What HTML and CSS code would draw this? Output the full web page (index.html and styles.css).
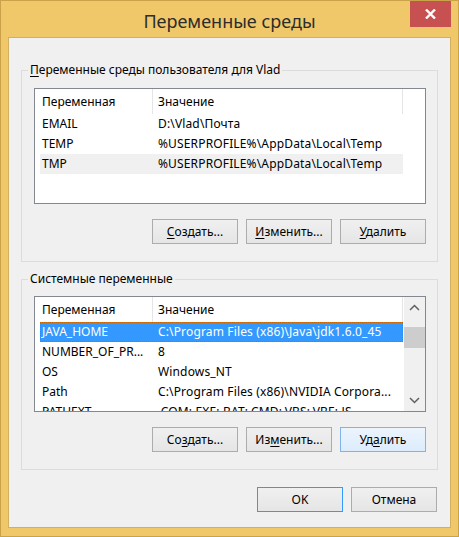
FILE: index.html
```html
<!DOCTYPE html>
<html lang="ru">
<head>
<meta charset="utf-8">
<title>Переменные среды</title>
<link rel="stylesheet" href="styles.css">
</head>
<body>
<div class="window">
  <div class="titlebar">
    <span></span>
    <div class="title">Переменные среды</div>
    <div class="close">
      <svg width="11" height="10" viewBox="0 0 11 10"><path d="M1 0.5 L10 9.5 M10 0.5 L1 9.5" stroke="#fff" stroke-width="2.4" fill="none"/></svg>
    </div>
  </div>
  <div class="client">
    <fieldset class="group g1">
      <legend><u>П</u>еременные среды пользователя для Vlad</legend>
      <div class="list">
        <div class="lmain">
          <div class="lhead"><div class="h1">Переменная</div><div class="h2">Значение</div></div>
          <div class="row"><span class="c1">EMAIL</span><span class="c2">D:\Vlad\Почта</span></div>
          <div class="row"><span class="c1">TEMP</span><span class="c2">%USERPROFILE%\AppData\Local\Temp</span></div>
          <div class="row inactive"><span class="c1">TMP</span><span class="c2">%USERPROFILE%\AppData\Local\Temp</span></div>
        </div>
      </div>
      <div class="btns">
        <div class="btn"><u>С</u>оздать...</div>
        <div class="btn"><u>И</u>зменить...</div>
        <div class="btn"><u>У</u>далить</div>
      </div>
    </fieldset>
    <fieldset class="group g2">
      <legend>Системные переменные</legend>
      <div class="list">
        <div class="lmain">
          <div class="lhead"><div class="h1">Переменная</div><div class="h2">Значение</div></div>
          <div class="row selected"><span class="c1">JAVA_HOME</span><span class="c2">C:\Program Files (x86)\Java\jdk1.6.0_45</span></div>
          <div class="row"><span class="c1">NUMBER_OF_PR...</span><span class="c2">8</span></div>
          <div class="row"><span class="c1">OS</span><span class="c2">Windows_NT</span></div>
          <div class="row"><span class="c1">Path</span><span class="c2">C:\Program Files (x86)\NVIDIA Corpora...</span></div>
          <div class="row"><span class="c1">PATHEXT</span><span class="c2">.COM;.EXE;.BAT;.CMD;.VBS;.VBE;.JS...</span></div>
        </div>
        <div class="sbar">
          <div class="sarrow"><svg width="11" height="7" viewBox="0 0 11 7"><path d="M1 6 L5.5 1.5 L10 6" stroke="#606060" stroke-width="1.5" fill="none"/></svg></div>
          <div class="strack"><div class="thumb"></div></div>
          <div class="sarrow"><svg width="11" height="7" viewBox="0 0 11 7"><path d="M1 1 L5.5 5.5 L10 1" stroke="#606060" stroke-width="1.5" fill="none"/></svg></div>
        </div>
      </div>
      <div class="btns">
        <div class="btn">Со<u>з</u>дать...</div>
        <div class="btn">Из<u>м</u>енить...</div>
        <div class="btn hover">Уд<u>а</u>лить</div>
      </div>
    </fieldset>
    <div class="dlgbtns">
      <div class="btn default">OK</div>
      <div class="btn">Отмена</div>
    </div>
  </div>
</div>
</body>
</html>
```
FILE: styles.css
```css
html, body {
  margin: 0;
  padding: 0;
  background: #f0c86a;
}
body {
  font-family: "Noto Sans", "Open Sans", sans-serif;
  font-size: 12px;
  color: #000;
}
.window {
  width: 459px;
  height: 537px;
  box-sizing: border-box;
  border: 1px solid #c9a24a;
  background: #f0c86a;
  padding: 0 7px 8px;
  display: flex;
  flex-direction: column;
}
.titlebar {
  height: 36px;
  flex: none;
  display: grid;
  grid-template-columns: 1fr auto 1fr;
}
.title {
  font-size: 18px;
  line-height: 24px;
  padding-top: 8px;
  color: #2c2c2c;
  white-space: nowrap;
}
.close {
  justify-self: end;
  width: 41px;
  height: 26px;
  background: #c75050;
  display: flex;
  align-items: center;
  justify-content: center;
}
.client {
  flex: 1;
  border: 1px solid #d2b062;
  background: #f0f0f0;
  padding: 24px 12px 0;
  display: flex;
  flex-direction: column;
}
.group {
  margin: 0;
  border: 1px solid #dcdcdc;
  padding: 10px 11px 17px 12px;
  min-width: 0;
}
.g2 {
  margin-top: 9px;
  padding-top: 9px;
}
legend {
  padding: 0 2px;
  margin-left: -6px;
  line-height: 16px;
}
u {
  text-decoration: underline;
  text-underline-offset: 2px;
}
.list {
  height: 116px;
  box-sizing: border-box;
  border: 1px solid #828790;
  background: #fff;
  overflow: hidden;
  display: flex;
}
.lmain {
  flex: 1;
  min-width: 0;
  overflow: hidden;
}
.lhead {
  display: flex;
  height: 25px;
  line-height: 25px;
}
.h1 {
  width: 118px;
  box-sizing: border-box;
  padding-left: 7px;
  border-right: 1px solid #e5e5e5;
}
.h2 {
  width: 250px;
  box-sizing: border-box;
  padding-left: 5px;
  border-right: 1px solid #e5e5e5;
}
.row {
  display: flex;
  height: 20px;
  line-height: 20px;
  margin-left: 5px;
  width: 363px;
  white-space: nowrap;
}
.c1 {
  width: 112px;
  flex: none;
  box-sizing: border-box;
  padding-left: 2px;
  overflow: hidden;
}
.c2 {
  width: 251px;
  flex: none;
  box-sizing: border-box;
  padding-left: 6px;
  overflow: hidden;
  letter-spacing: 0.15px;
}
.row.inactive {
  background: #f0f0f0;
}
.row.selected {
  background: #3399ff;
  color: #fff;
  outline: 1px dotted #cc6600;
  outline-offset: -1px;
}
.sbar {
  width: 21px;
  flex: none;
  background: #f0f0f0;
  display: flex;
  flex-direction: column;
}
.sarrow {
  height: 21px;
  display: flex;
  align-items: center;
  justify-content: center;
}
.strack {
  flex: 1;
  padding-top: 9px;
}
.thumb {
  height: 21px;
  background: #cdcdcd;
}
.btns {
  display: flex;
  justify-content: flex-end;
  gap: 8px;
  margin-top: 15px;
}
.btn {
  width: 86px;
  height: 25px;
  box-sizing: border-box;
  border: 1px solid #acacac;
  background: linear-gradient(#f0f0f0, #e5e5e5);
  text-align: center;
  line-height: 23px;
  white-space: nowrap;
}
.btn.hover {
  border-color: #7eb4ea;
  background: linear-gradient(#ecf4fc, #dcecfc);
}
.btn.default {
  border-color: #3399ff;
}
.dlgbtns {
  display: flex;
  justify-content: flex-end;
  gap: 8px;
  margin-top: 17px;
  margin-right: 1px;
}
```
